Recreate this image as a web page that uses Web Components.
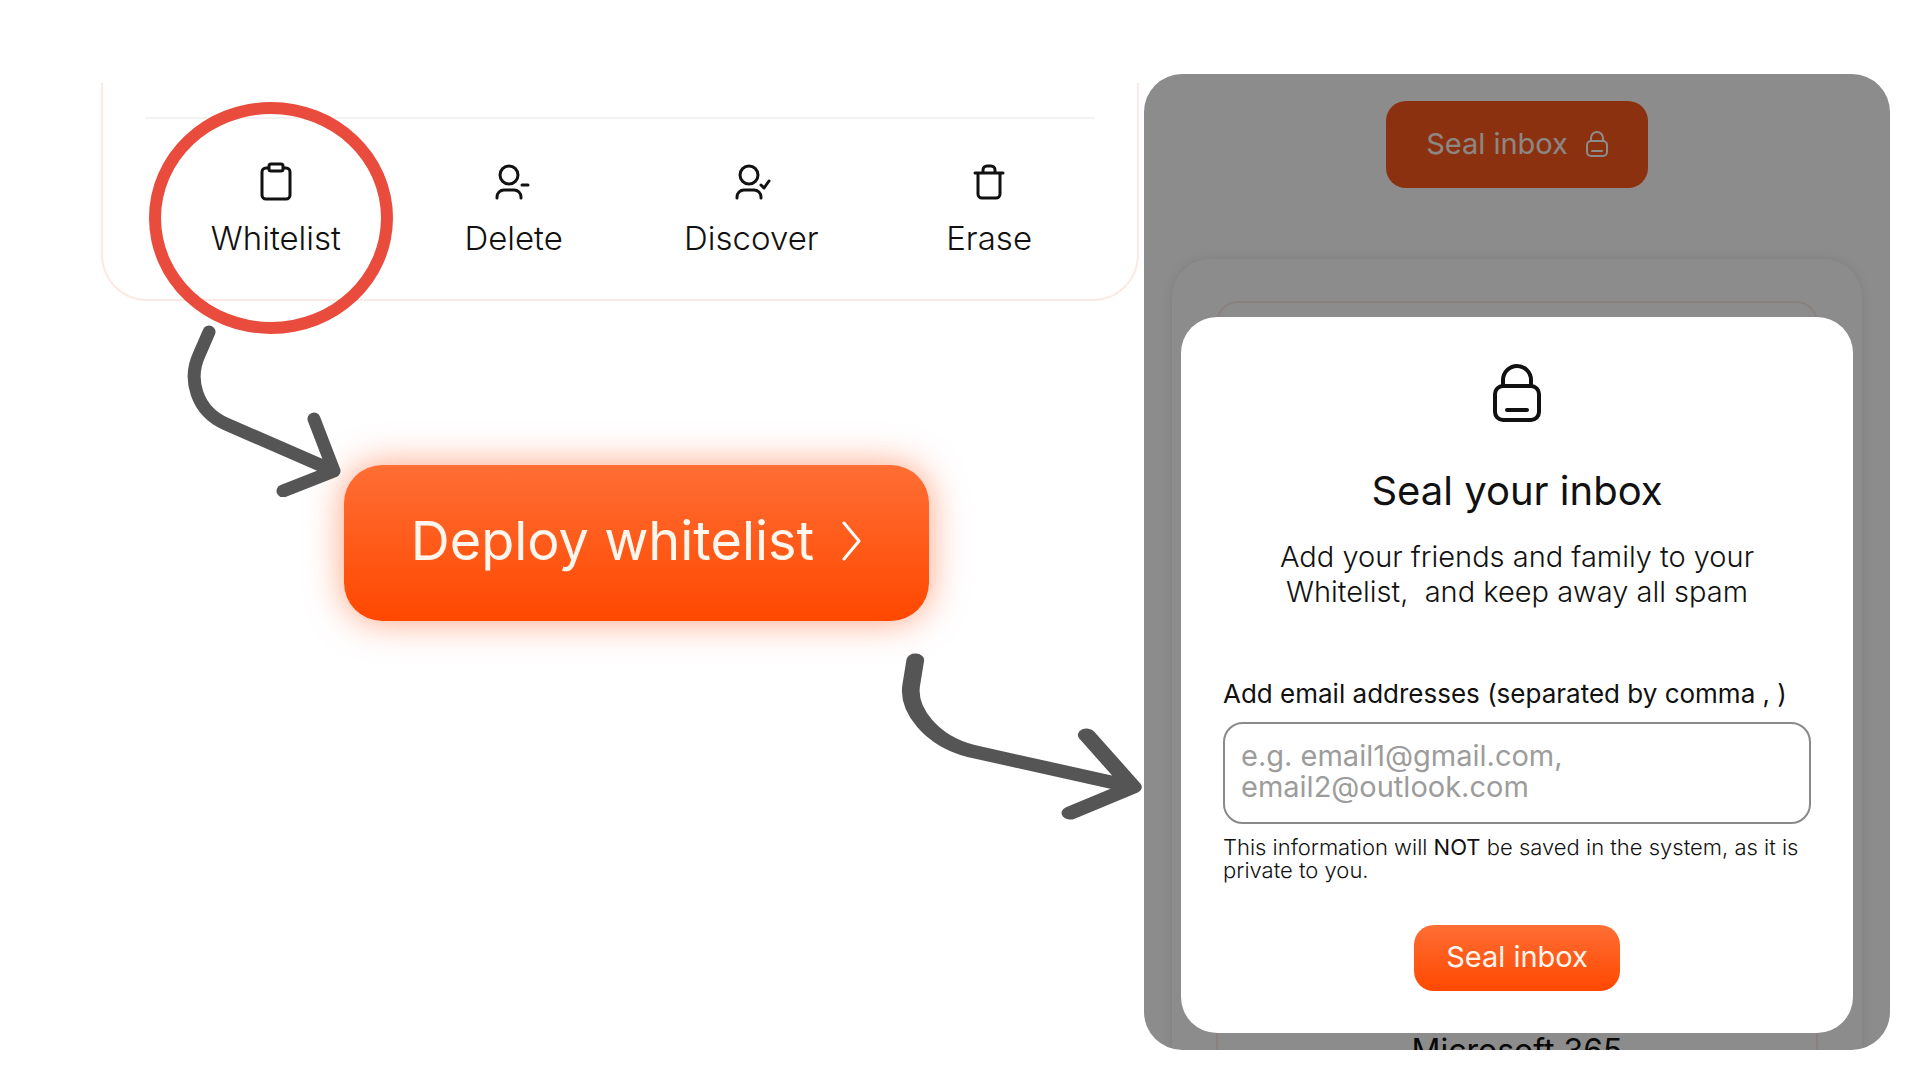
<!DOCTYPE html>
<html lang="en">
<head>
<meta charset="utf-8">
<title>Seal your inbox</title>
<style>
    body {
        margin: 0;
        background: #fff;
        color: #111;
        font-family: Inter, "Liberation Sans", sans-serif;
    }
</style>
</head>
<body>
<whitelist-guide>
    <action-card slot="actions">
        <action-item label="Whitelist" marked>
            <svg viewBox="0 0 40 40"><rect x="6" y="7" width="28" height="31" rx="4"/><rect fill="#fff" x="13" y="3" width="14" height="7" rx="2"/></svg>
        </action-item>
        <action-item label="Delete">
            <svg viewBox="0 0 40 40"><ellipse cx="15" cy="14" rx="9" ry="9"/><path d="M3 37v-1a7 7 0 0 1 7-7h10a7 7 0 0 1 7 7v1M28 24h6"/></svg>
        </action-item>
        <action-item label="Discover">
            <svg viewBox="-3 0 40 40"><ellipse cx="15" cy="14" rx="9" ry="9"/><path d="M3 37v-1a7 7 0 0 1 7-7h10a7 7 0 0 1 7 7v1M27 24l3 3 5-7"/></svg>
        </action-item>
        <action-item label="Erase">
            <svg viewBox="0 0 40 40"><path d="M6 12h28M9 12v21a4 4 0 0 0 4 4h14a4 4 0 0 0 4-4V12M14 12V9a4 4 0 0 1 4-4h4a4 4 0 0 1 4 4v3"/></svg>
        </action-item>
    </action-card>

    <orange-button slot="deploy" size="large">
        Deploy whitelist
        <svg slot="icon" width="20" height="40" viewBox="0 0 20 40" fill="none" stroke="#fff" stroke-width="3" stroke-linecap="round" stroke-linejoin="round"><path d="M2 2l15 18L2 38"/></svg>
    </orange-button>

    <inbox-panel slot="panel">
        <seal-dialog></seal-dialog>
    </inbox-panel>
</whitelist-guide>

<script>
class OrangeButton extends HTMLElement {
    constructor() {
        super();
        this.attachShadow({ mode: 'open' });

        this.shadowRoot.innerHTML = `<style>
        :host {
            display: inline-block;
        }
        button {
            display: flex;
            align-items: center;
            justify-content: center;
            gap: 18px;
            box-sizing: border-box;
            width: 100%;
            height: 66px;
            padding: 0 32px 2px;
            border: 0;
            border-radius: 20px;
            background: linear-gradient(#ff6e34, #ff4800);
            color: #fff6ee;
            font: 400 29px/40px Inter, "Liberation Sans", sans-serif;
            white-space: nowrap;
        }
        :host([size="large"]) button {
            height: 156px;
            gap: 28px;
            padding-bottom: 4px;
            border-radius: 38px;
            box-shadow: 0 0 36px rgba(255, 84, 24, 0.55);
            font-size: 54px;
            line-height: 64px;
        }
        :host([size="medium"]) button {
            height: 87px;
            padding: 0 40px 2px;
            background: #ff5a1d;
        }
        </style>
        <button type="button"><span><slot></slot></span><slot name="icon"></slot></button>
        `;
    }
}

class ActionItem extends HTMLElement {
    constructor() {
        super();
        this.attachShadow({ mode: 'open' });

        this.shadowRoot.innerHTML = `<style>
        :host {
            display: block;
            position: relative;
        }
        button {
            display: flex;
            flex-direction: column;
            align-items: center;
            gap: 17px;
            width: 100%;
            padding: 0;
            border: 0;
            background: none;
            color: #111;
            font: 300 33px/40px Inter, "Liberation Sans", sans-serif;
        }
        ::slotted(svg) {
            width: 40px;
            height: 40px;
            fill: none;
            stroke: #111;
            stroke-width: 3;
            stroke-linecap: round;
            stroke-linejoin: round;
        }
        .ring {
            display: none;
            position: absolute;
            top: 50%;
            left: 50%;
            width: 244px;
            height: 232px;
            margin: -108px 0 0 -127px;
            box-sizing: border-box;
            border: 12px solid #e94b3c;
            border-radius: 50%;
            pointer-events: none;
        }
        :host([marked]) .ring {
            display: block;
        }
        </style>
        <button type="button"><slot></slot><span class="label"></span></button>
        <div class="ring"></div>
        `;
    }

    static get observedAttributes() {
        return ['label'];
    }

    attributeChangedCallback(name, oldValue, newValue) {
        this.shadowRoot.querySelector('.label').textContent = newValue;
    }
}

class ActionCard extends HTMLElement {
    constructor() {
        super();
        this.attachShadow({ mode: 'open' });

        this.shadowRoot.innerHTML = `<style>
        :host {
            display: block;
            padding: 34px 0 41px;
            border: 2px solid #fbe9e3;
            border-top: 0;
            border-radius: 0 0 46px 46px;
        }
        hr {
            height: 2px;
            margin: 0 42px;
            border: 0;
            background: #f3f2f2;
        }
        .row {
            display: grid;
            grid-template-columns: repeat(4, 1fr);
            padding: 42px 29px 0 54px;
        }
        </style>
        <hr>
        <div class="row"><slot></slot></div>
        `;
    }
}

class SealDialog extends HTMLElement {
    constructor() {
        super();
        this.attachShadow({ mode: 'open' });

        this.shadowRoot.innerHTML = `<style>
        :host {
            display: flex;
            flex-direction: column;
            align-items: center;
            padding: 46px 42px 42px;
            border-radius: 36px;
            background: #fff;
        }
        h2 {
            margin: 44px 0 24px;
            font-size: 40px;
            font-weight: 400;
            line-height: 48px;
        }
        .lead {
            margin: 0 0 68px;
            font-size: 29px;
            font-weight: 300;
            line-height: 35px;
            text-align: center;
        }
        form {
            display: flex;
            flex-direction: column;
            align-self: stretch;
        }
        label {
            margin-bottom: 12px;
            font-size: 26px;
            line-height: 33px;
            white-space: nowrap;
        }
        textarea {
            box-sizing: border-box;
            width: 100%;
            height: 102px;
            padding: 16px;
            border: 2px solid #8a8a8a;
            border-radius: 20px;
            resize: none;
            overflow: hidden;
            font: 400 29px/31px Inter, "Liberation Sans", sans-serif;
        }
        textarea::placeholder {
            color: #9c9c9c;
        }
        .note {
            margin: 12px 0 43px;
            font-size: 22px;
            font-weight: 300;
            line-height: 23px;
        }
        .note b {
            font-weight: 400;
        }
        orange-button {
            align-self: center;
        }
        </style>
        <svg width="48" height="60" viewBox="0 0 48 60" fill="none" stroke="#111" stroke-width="4" stroke-linecap="round" stroke-linejoin="round"><path d="M10 23v-6a14 14 0 0 1 28 0v6"/><rect x="2" y="23" width="44" height="34" rx="8"/><path d="M14 47h20"/></svg>
        <h2>Seal your inbox</h2>
        <p class="lead">Add your friends and family to your<br>Whitelist,&nbsp; and keep away all spam</p>
        <form>
            <label for="emails">Add email addresses (separated by comma , )</label>
            <textarea id="emails" placeholder="e.g. email1@gmail.com, email2@outlook.com"></textarea>
            <p class="note">This information will <b>NOT</b> be saved in the system, as it is private to you.</p>
            <orange-button>Seal inbox</orange-button>
        </form>
        `;
    }
}

class InboxPanel extends HTMLElement {
    constructor() {
        super();
        this.attachShadow({ mode: 'open' });

        this.shadowRoot.innerHTML = `<style>
        :host {
            display: block;
            position: relative;
            overflow: hidden;
            padding: 243px 37px 17px;
            border-radius: 38px;
            background: #fff;
        }
        /* the page that lies dimmed under the dialog */
        .behind {
            position: absolute;
            inset: 0;
            display: flex;
            flex-direction: column;
            align-items: center;
            padding: 27px 28px 0;
        }
        .behind::after {
            content: "";
            position: absolute;
            inset: 0;
            background: rgba(0, 0, 0, 0.45);
        }
        .outer {
            align-self: stretch;
            margin-top: 71px;
            padding: 42px 44px 0;
            border-radius: 38px;
            box-shadow: 0 0 12px rgba(0, 0, 0, 0.1);
        }
        .inner {
            padding-top: 728px;
            border: 2px solid #fbece6;
            border-radius: 22px;
            text-align: center;
        }
        h3 {
            margin: 0 0 60px;
            font-size: 32px;
            font-weight: 400;
            line-height: 40px;
        }
        .front {
            position: relative;
        }
        </style>
        <div class="behind">
            <orange-button size="medium">Seal inbox
                <svg slot="icon" width="22" height="26" viewBox="0 0 22 26" fill="none" stroke="#fff" stroke-width="2" stroke-linecap="round" stroke-linejoin="round"><path d="M5 10V7a6 6 0 0 1 12 0v3"/><rect x="1" y="10" width="20" height="15" rx="4"/><path d="M6 20h10"/></svg>
            </orange-button>
            <div class="outer"><div class="inner"><h3>Microsoft 365</h3></div></div>
        </div>
        <div class="front"><slot></slot></div>
        `;
    }
}

class FlowArrow extends HTMLElement {
    constructor() {
        super();
        this.attachShadow({ mode: 'open' });

        this.shadowRoot.innerHTML = `<style>
        :host {
            display: block;
        }
        svg {
            display: block;
            fill: none;
            stroke: #555;
            stroke-width: 13;
            stroke-linecap: round;
            stroke-linejoin: round;
        }
        </style>
        <slot></slot>
        `;
    }

    connectedCallback() {
        const wide = this.hasAttribute('wide');
        const svg = wide
            ? `<svg width="244" height="172" viewBox="0 0 244 172"><g transform="scale(1.36 1)"><path d="M12 10L9 35C6 60 24 91 53 101L172 137M138 85L172 137L126 163"/></g></svg>`
            : `<svg width="156" height="176" viewBox="0 0 156 176"><path d="M22 11L12 34C1 58 9 90 39 103L147 150M127 98L147 150L96 170"/></svg>`;
        this.shadowRoot.querySelector('slot').insertAdjacentHTML('afterend', svg);
    }
}

class WhitelistGuide extends HTMLElement {
    constructor() {
        super();
        this.attachShadow({ mode: 'open' });

        this.shadowRoot.innerHTML = `<style>
        :host {
            display: grid;
            grid-template-columns: 1038fr 746fr;
            gap: 5px;
            padding: 74px 30px 30px 101px;
        }
        .steps {
            position: relative;
            padding-top: 9px;
        }
        .deploy {
            margin: 164px 210px 0 243px;
        }
        ::slotted(orange-button) {
            display: block;
        }
        /* hand drawn arrows float over the two steps */
        flow-arrow {
            position: absolute;
        }
        .first {
            top: 247px;
            left: 86px;
        }
        .second {
            top: 576px;
            right: -4px;
        }
        </style>
        <div class="steps">
            <slot name="actions"></slot>
            <div class="deploy"><slot name="deploy"></slot></div>
            <flow-arrow class="first"></flow-arrow>
            <flow-arrow class="second" wide></flow-arrow>
        </div>
        <slot name="panel"></slot>
        `;
    }
}

window.customElements.define('orange-button', OrangeButton);
window.customElements.define('action-item', ActionItem);
window.customElements.define('action-card', ActionCard);
window.customElements.define('seal-dialog', SealDialog);
window.customElements.define('inbox-panel', InboxPanel);
window.customElements.define('flow-arrow', FlowArrow);
window.customElements.define('whitelist-guide', WhitelistGuide);
</script>
</body>
</html>
